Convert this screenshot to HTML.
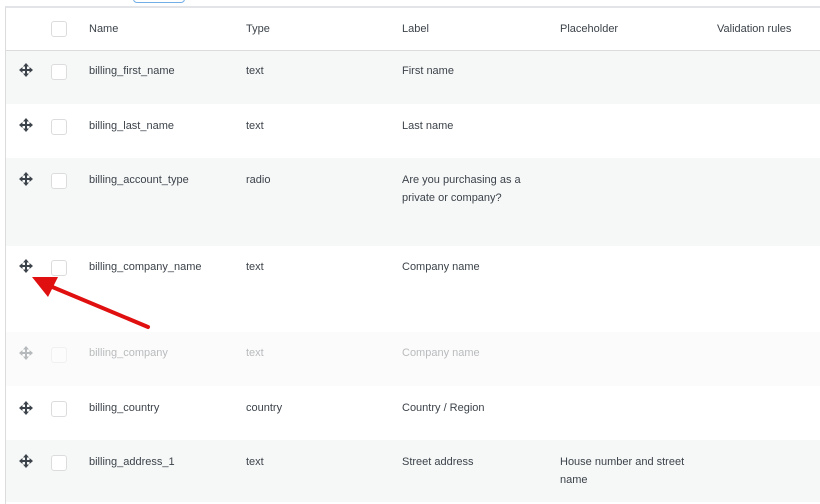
<!DOCTYPE html><html><head><style>
body{margin:0;width:820px;height:502px;overflow:hidden;background:#fff;font-family:"Liberation Sans",sans-serif;font-size:11px;color:#3c434a;position:relative}
.t{position:absolute;left:5px;top:6px;width:815px;height:496px;border-left:1px solid #dcdcde;border-top:2px solid #e2e4e7}
.r{position:absolute;left:6px;width:814px}
.g{background:#f6f7f7}
.c{position:absolute;white-space:nowrap;line-height:18px}
.cb{position:absolute;left:45px;width:14px;height:14px;border:1px solid #dcdcde;border-radius:3px;background:#fff}
.ic{position:absolute;left:13px}
.f{opacity:.35}
</style></head><body>
<div style="position:absolute;left:133px;top:-8px;width:50px;height:9px;border:1px solid #72aee6;border-radius:4px"></div>
<div class="t"></div>
<div class="r" style="top:8px;height:42px;border-bottom:1px solid #dcdcde">
<div class="cb" style="top:13px"></div>
<div class="c" style="left:83px;top:12px">Name</div><div class="c" style="left:240px;top:12px">Type</div><div class="c" style="left:396px;top:12px">Label</div><div class="c" style="left:554px;top:12px">Placeholder</div><div class="c" style="left:711px;top:12px">Validation rules</div>
</div>
<svg width="0" height="0" style="position:absolute"><defs><g id="mv" fill="#3c434a"><rect x="6" y="2" width="2" height="10"/><rect x="2" y="6" width="10" height="2"/><path d="M7 0L10 3.5H4ZM7 14L10 10.5H4ZM0 7L3.5 4V10ZM14 7L10.5 4V10Z"/></g></defs></svg>

<div class="r g" style="top:51px;height:53px"><svg class="ic" style="top:12px" width="14" height="14"><use href="#mv"/></svg><div class="cb" style="top:13px"></div><div class="c" style="left:83px;top:11px">billing_first_name</div><div class="c" style="left:240px;top:11px">text</div><div class="c" style="left:396px;top:11px">First name</div></div>
<div class="r" style="top:104px;height:54px"><svg class="ic" style="top:14px" width="14" height="14"><use href="#mv"/></svg><div class="cb" style="top:15px"></div><div class="c" style="left:83px;top:13px">billing_last_name</div><div class="c" style="left:240px;top:13px">text</div><div class="c" style="left:396px;top:13px">Last name</div></div>
<div class="r g" style="top:158px;height:88px"><svg class="ic" style="top:14px" width="14" height="14"><use href="#mv"/></svg><div class="cb" style="top:15px"></div><div class="c" style="left:83px;top:13px">billing_account_type</div><div class="c" style="left:240px;top:13px">radio</div><div class="c" style="left:396px;top:13px">Are you purchasing as a<br>private or company?</div></div>
<div class="r" style="top:246px;height:86px"><svg class="ic" style="top:13px" width="14" height="14"><use href="#mv"/></svg><div class="cb" style="top:14px"></div><div class="c" style="left:83px;top:12px">billing_company_name</div><div class="c" style="left:240px;top:12px">text</div><div class="c" style="left:396px;top:12px">Company name</div></div>
<div class="r" style="top:332px;height:54px;background:#fbfbfb"><div class="f"><svg class="ic" style="top:14px" width="14" height="14"><use href="#mv"/></svg><div class="cb" style="top:15px"></div><div class="c" style="left:83px;top:12px">billing_company</div><div class="c" style="left:240px;top:12px">text</div><div class="c" style="left:396px;top:12px">Company name</div></div></div>
<div class="r" style="top:386px;height:54px"><svg class="ic" style="top:15px" width="14" height="14"><use href="#mv"/></svg><div class="cb" style="top:15px"></div><div class="c" style="left:83px;top:13px">billing_country</div><div class="c" style="left:240px;top:13px">country</div><div class="c" style="left:396px;top:13px">Country / Region</div></div>
<div class="r g" style="top:440px;height:62px"><svg class="ic" style="top:14px" width="14" height="14"><use href="#mv"/></svg><div class="cb" style="top:15px"></div><div class="c" style="left:83px;top:13px">billing_address_1</div><div class="c" style="left:240px;top:13px">text</div><div class="c" style="left:396px;top:13px">Street address</div><div class="c" style="left:554px;top:13px">House number and street<br>name</div></div>

<svg style="position:absolute;left:0;top:0" width="820" height="502"><line x1="148" y1="327" x2="50" y2="286" stroke="#e01010" stroke-width="4" stroke-linecap="round"/><path d="M32 277L58 277L48 297Z" fill="#e01010"/></svg>
</body></html>
